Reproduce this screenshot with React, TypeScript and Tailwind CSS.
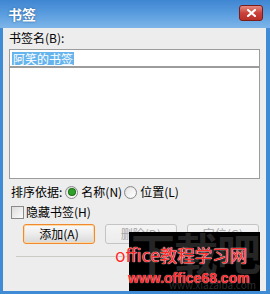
import React from "react";

const font = { fontFamily: '"Noto Sans CJK SC", "Liberation Sans", sans-serif' };

function Radio({ checked }: { checked?: boolean }) {
  return (
    <span className="relative flex h-[13px] w-[13px] items-center justify-center rounded-full border border-[#8a8a8a] bg-gradient-to-br from-[#d8d8d8] to-[#ffffff]">
      <span className="h-[9px] w-[9px] rounded-full bg-gradient-to-br from-[#e6e6e6] to-[#ffffff] flex items-center justify-center">
        {checked && (
          <span className="h-[6px] w-[6px] rounded-full bg-[#2ea12a] shadow-[0_0_0_1px_#1d6e1a]" />
        )}
      </span>
    </span>
  );
}

function Btn({ label, disabled, focused }: { label: string; disabled?: boolean; focused?: boolean }) {
  return (
    <div
      className={
        "flex h-[20px] w-[72px] items-center justify-center rounded-[3px] border text-[12px] leading-none " +
        (focused
          ? "border-[#f08a2c] bg-gradient-to-b from-[#fafafa] via-[#ececec] to-[#d8d8d8] text-black shadow-[inset_0_0_0_1px_#fcd9a8]"
          : disabled
          ? "border-[#c4c4c4] bg-gradient-to-b from-[#f4f4f4] to-[#ececec] text-[#a6a6a6]"
          : "border-[#8e8e8e] bg-gradient-to-b from-[#f6f6f6] to-[#dcdcdc] text-black")
      }
    >
      {label}
    </div>
  );
}

export default function App() {
  return (
    <div className="relative flex h-[294px] w-[270px] flex-col overflow-hidden bg-[#3f8bd6]" style={font}>
      {/* title bar */}
      <div className="relative flex h-[28px] items-center bg-gradient-to-b from-[#3f86d2] via-[#5a9ddf] to-[#7db5e8] pl-[8px]">
        <span className="text-[14px] font-bold text-white [text-shadow:0_0_2px_#1d4f86]">书签</span>
        <div className="absolute left-[239px] top-[5px] flex h-[16px] w-[24px] items-center justify-center rounded-[3px] border border-[#7a1d18] bg-gradient-to-b from-[#e58a80] via-[#c9413a] to-[#b83028]">
          <svg width="9" height="8" viewBox="0 0 9 8">
            <path d="M1 1 L8 7 M8 1 L1 7" stroke="white" strokeWidth="2.2" strokeLinecap="square" />
          </svg>
        </div>
      </div>
      {/* client */}
      <div className="mb-[3px] ml-[3px] mr-[4px] flex flex-1 flex-col bg-[#ededed] px-[6px] text-[12px] text-black">
        <div className="mt-[2px] h-[16px] leading-[16px]">书签名(B):</div>
        <div className="mt-[3px] flex h-[18px] items-center border border-[#9c9c9c] bg-white pl-[2px]">
          <span className="bg-[#66b4ee] px-[1px] leading-[13px] text-white">阿笑的书签</span>
        </div>
        <div className="h-[112px] border border-[#9c9c9c] bg-white" />
        <div className="mt-[6px] flex h-[14px] items-center pl-[2px] leading-none">
          <span>排序依据:</span>
          <span className="ml-[3px]"><Radio checked /></span>
          <span className="ml-[3px]">名称(N)</span>
          <span className="ml-[2px]"><Radio /></span>
          <span className="ml-[3px]">位置(L)</span>
        </div>
        <div className="mt-[6px] flex h-[14px] items-center pl-[2px] leading-none">
          <span className="h-[13px] w-[13px] border border-[#8a8a8a] bg-gradient-to-br from-[#dcdcdc] to-[#fbfbfb]" />
          <span className="ml-[2px]">隐藏书签(H)</span>
        </div>
        <div className="mt-[5px] flex gap-[10px] pl-[14px]">
          <Btn label="添加(A)" focused />
          <Btn label="删除(D)" disabled />
          <Btn label="定位(G)" disabled />
        </div>
        <div className="ml-[7px] mr-[7px] mt-[12px] h-[1px] bg-[#cbcbc3]" />
      </div>
      {/* watermark overlay */}
      <div className="absolute left-[129px] top-[232px] h-[59px] w-[131px] overflow-hidden bg-black">
        <div className="absolute left-[2px] top-[-2px] text-[44px] font-bold leading-none tracking-[-1px] text-[#252525]">下载吧</div>
        <div className="absolute bottom-[1px] right-[4px] text-[10px] leading-none text-[#2e2e2e]">www.xiazaiba.com</div>
      </div>
      <div className="absolute left-[115px] top-[246px] text-[17.5px] leading-none text-[#ff2a2a] [text-shadow:0_0_1px_#fff,0_0_1px_#fff]">
        office教程学习网
      </div>
      <div className="absolute left-[128px] top-[271px] text-[14px] font-bold leading-none text-[#ff2a2a] [text-shadow:0_0_1px_#fff]" style={{ fontFamily: '"Liberation Sans", sans-serif' }}>
        www.office68.com
      </div>
    </div>
  );
}
